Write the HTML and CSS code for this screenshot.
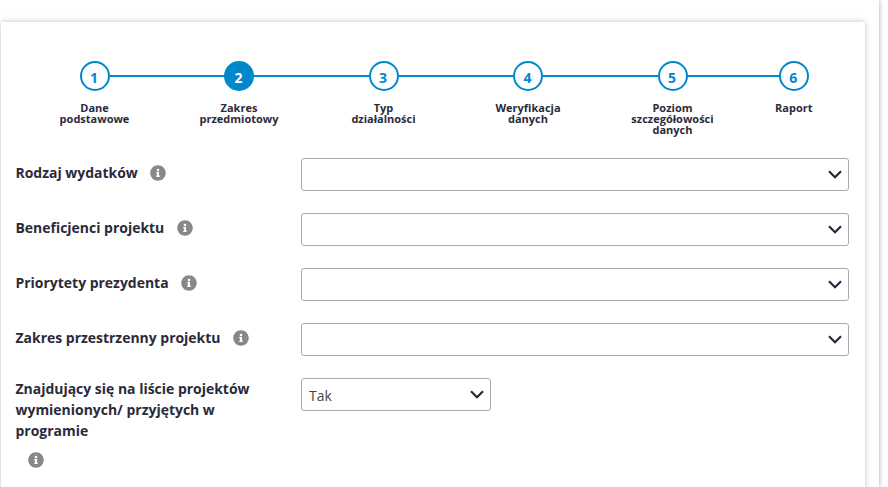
FILE: index.html
```html
<!DOCTYPE html>
<html lang="pl">
<head>
    <meta charset="UTF-8">
    <meta name="viewport" content="width=device-width, initial-scale=1.0">
    <title>Zakres przedmiotowy</title>
    <link rel="stylesheet" href="styles.css">
</head>
<body>
    <svg class="icon-defs" width="0" height="0" aria-hidden="true">
        <symbol id="info" viewBox="0 0 512 512">
            <path d="M256 8C119 8 8 119.100 8 256c0 137 111 248 248 248s248-111 248-248C504 119.100 393 8 256 8zm0 110c23.200 0 42 18.800 42 42s-18.800 42-42 42-42-18.800-42-42 18.800-42 42-42zm56 254c0 6.600-5.400 12-12 12h-88c-6.600 0-12-5.400-12-12v-24c0-6.600 5.400-12 12-12h12v-64h-12c-6.600 0-12-5.400-12-12v-24c0-6.600 5.400-12 12-12h64c6.600 0 12 5.400 12 12v100h12c6.600 0 12 5.400 12 12v24z"/>
        </symbol>
        <symbol id="chevron" viewBox="0 0 14 9">
            <path d="M1 1.200 7 7.200l6-6" fill="none" stroke="currentColor" stroke-width="2.200"/>
        </symbol>
    </svg>

    <div class="page">
        <main class="card">
            <ol class="steps">
                <li class="step"><span class="step-num">1</span><span class="step-name">Dane<br>podstawowe</span></li>
                <li class="step active"><span class="step-num">2</span><span class="step-name">Zakres<br>przedmiotowy</span></li>
                <li class="step"><span class="step-num">3</span><span class="step-name">Typ<br>działalności</span></li>
                <li class="step"><span class="step-num">4</span><span class="step-name">Weryfikacja<br>danych</span></li>
                <li class="step"><span class="step-num">5</span><span class="step-name">Poziom<br>szczegółowości<br>danych</span></li>
                <li class="step"><span class="step-num">6</span><span class="step-name">Raport</span></li>
            </ol>

            <form class="form">
                <div class="row">
                    <label class="label">Rodzaj wydatków <svg class="info"><use href="#info"/></svg></label>
                    <div class="select"><select></select><svg class="chevron"><use href="#chevron"/></svg></div>
                </div>
                <div class="row">
                    <label class="label">Beneficjenci projektu <svg class="info"><use href="#info"/></svg></label>
                    <div class="select"><select></select><svg class="chevron"><use href="#chevron"/></svg></div>
                </div>
                <div class="row">
                    <label class="label">Priorytety prezydenta <svg class="info"><use href="#info"/></svg></label>
                    <div class="select"><select></select><svg class="chevron"><use href="#chevron"/></svg></div>
                </div>
                <div class="row">
                    <label class="label">Zakres przestrzenny projektu <svg class="info"><use href="#info"/></svg></label>
                    <div class="select"><select></select><svg class="chevron"><use href="#chevron"/></svg></div>
                </div>
                <div class="row row-tall">
                    <label class="label label-wrap">Znajdujący się na liście projektów wymienionych/ przyjętych w programie
                        <svg class="info info-below"><use href="#info"/></svg></label>
                    <div class="select select-small"><select><option>Tak</option></select><svg class="chevron"><use href="#chevron"/></svg></div>
                </div>
            </form>
        </main>
    </div>
</body>
</html>
```
FILE: styles.css
```css
html, body {
    margin: 0;
    padding: 0;
    height: 100%;
    overflow: hidden;
    background: #fff;
}

body {
    font-family: "Open Sans", sans-serif;
    color: #2b2a3a;
}

.icon-defs {
    display: block;
    height: 0;
}

.page {
    width: 879px;
    height: 100%;
    box-sizing: border-box;
    padding: 22px 14px 0 1px;
    background: #fff;
    box-shadow: 0 0 5px rgba(0, 0, 0, 0.35);
    overflow: hidden;
}

.card {
    height: 600px;
    background: #fff;
    box-shadow: 0 0 6px rgba(0, 0, 0, 0.25);
}

.steps {
    display: grid;
    grid-template-columns: repeat(5, 144.5px) 98px;
    margin: 0;
    padding: 39px 0 0 21.25px;
    list-style: none;
}

.step {
    position: relative;
    display: flex;
    flex-direction: column;
    align-items: center;
    height: 97px;
}

/* line to the next circle */
.step::after {
    content: "";
    position: absolute;
    top: 14px;
    left: 50%;
    width: 100%;
    height: 2px;
    background: #0088cc;
}

.step:nth-child(5)::after {
    width: 121px;
}

.step:last-child::after {
    display: none;
}

.step-num {
    position: relative;
    z-index: 1;
    box-sizing: border-box;
    width: 30px;
    height: 30px;
    padding-right: 1px;
    border: 2px solid #0088cc;
    border-radius: 50%;
    background: #fff;
    color: #0088cc;
    font-size: 14px;
    font-weight: 700;
    line-height: 29px;
    text-align: center;
}

.step.active .step-num {
    background: #0088cc;
    color: #fff;
}

.step-name {
    margin-top: 11px;
    font-size: 11px;
    font-weight: 700;
    line-height: 11px;
    text-align: center;
}

.form {
    padding: 0 16px 0 15px;
}

.row {
    display: grid;
    grid-template-columns: 285px 1fr;
    height: 55px;
}

.label {
    display: flex;
    align-items: flex-start;
    gap: 12.5px;
    height: 33px;
    margin-left: -0.5px;
    padding-top: 5px;
    box-sizing: border-box;
    font-size: 13.96px;
    font-weight: 700;
}

.label .info {
    margin-top: 2px;
}

.label-wrap {
    display: block;
    height: auto;
    width: 250px;
    padding-top: 0;
    line-height: 21px;
}

.info {
    width: 16px;
    height: 16px;
    fill: #888;
    flex-shrink: 0;
}

.label .info-below {
    display: block;
    margin: 10.5px 0 0 12.5px;
}

.select {
    position: relative;
    height: 33px;
}

.select-small {
    width: 190px;
}

.select select {
    display: block;
    box-sizing: border-box;
    width: 100%;
    height: 100%;
    padding: 2px 30px 0 7px;
    border: 1px solid #aaa;
    border-radius: 3px;
    background: #fff;
    color: #444;
    font-family: inherit;
    font-size: 14px;
    appearance: none;
}

.chevron {
    position: absolute;
    top: 12px;
    right: 7px;
    width: 14px;
    height: 9px;
    color: #1c2b39;
    pointer-events: none;
}
```
